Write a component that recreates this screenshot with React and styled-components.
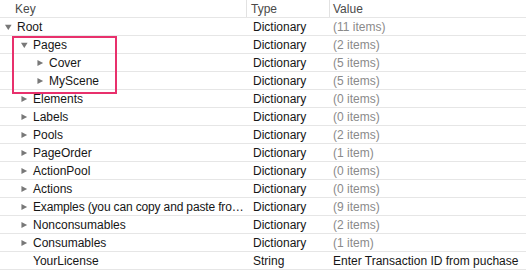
import React from 'react'
import styled, { createGlobalStyle } from 'styled-components'

const GlobalStyle = createGlobalStyle`
  body {
    margin: 0;
    background: #ffffff;
    font-family: "Liberation Sans", Arial, sans-serif;
  }
`

const Table = styled.div`
  position: relative;
  width: 526px;
  height: 270px;
  overflow: hidden;
  background: #fff;
  font-size: 12px;
  color: #161616;
`

const Row = styled.div`
  display: grid;
  grid-template-columns: 246px 83px 1fr;
  height: 18px;
  box-sizing: border-box;
  border-bottom: 1px solid #e6e6e6;
  align-items: center;
  white-space: nowrap;
`

const HeadCell = styled.div`
  height: 100%;
  display: flex;
  align-items: center;
  padding-left: ${p => p.$pad}px;
  color: #4a4a4a;
  border-left: ${p => (p.$sep ? '1px solid #e2e2e2' : 'none')};
  box-sizing: border-box;
`

const KeyCell = styled.div`
  display: flex;
  align-items: center;
  padding-left: ${p => 5 + p.$depth * 16}px;
  min-width: 0;
`

const Label = styled.span`
  letter-spacing: ${p => (p.$tight ? '-0.15px' : 'normal')};
`

const TypeCell = styled.div`
  padding-left: 7px;
`

const ValueCell = styled.div`
  padding-left: 4px;
  color: ${p => (p.$muted ? '#8a8a8a' : '#161616')};
`

const Toggle = styled.span`
  width: 7px;
  height: 8px;
  margin-right: 5px;
  display: inline-flex;
  align-items: center;
  justify-content: center;
  flex: none;
`

const Highlight = styled.div`
  position: absolute;
  left: 12px;
  top: 36px;
  width: 105px;
  height: 58px;
  box-sizing: border-box;
  border: 2px solid #e8306c;
  pointer-events: none;
`

function Arrow({ open }) {
  return (
    <Toggle>
      <svg width="8" height="8" viewBox="0 0 8 8">
        {open ? (
          <path d="M0 1.5 L7.5 1.5 L3.75 7.5 Z" fill="#787878" />
        ) : (
          <path d="M0.5 0.5 L7 4 L0.5 7.5 Z" fill="#787878" />
        )}
      </svg>
    </Toggle>
  )
}

const rows = [
  { key: 'Root', depth: 0, open: true, type: 'Dictionary', value: '(11 items)' },
  { key: 'Pages', depth: 1, open: true, type: 'Dictionary', value: '(2 items)' },
  { key: 'Cover', depth: 2, type: 'Dictionary', value: '(5 items)' },
  { key: 'MyScene', depth: 2, type: 'Dictionary', value: '(5 items)' },
  { key: 'Elements', depth: 1, type: 'Dictionary', value: '(0 items)' },
  { key: 'Labels', depth: 1, type: 'Dictionary', value: '(0 items)' },
  { key: 'Pools', depth: 1, type: 'Dictionary', value: '(2 items)' },
  { key: 'PageOrder', depth: 1, type: 'Dictionary', value: '(1 item)' },
  { key: 'ActionPool', depth: 1, type: 'Dictionary', value: '(0 items)' },
  { key: 'Actions', depth: 1, type: 'Dictionary', value: '(0 items)' },
  { key: 'Examples (you can copy and paste fro…', depth: 1, tight: true, type: 'Dictionary', value: '(9 items)' },
  { key: 'Nonconsumables', depth: 1, type: 'Dictionary', value: '(2 items)' },
  { key: 'Consumables', depth: 1, type: 'Dictionary', value: '(1 item)' },
  { key: 'YourLicense', depth: 1, leaf: true, type: 'String', value: 'Enter Transaction ID from puchase', plain: true },
]

export default function App() {
  return (
    <Table>
      <GlobalStyle />
      <Row>
        <HeadCell $pad={15}>Key</HeadCell>
        <HeadCell $pad={4} $sep>Type</HeadCell>
        <HeadCell $pad={3} $sep>Value</HeadCell>
      </Row>
      {rows.map(r => (
        <Row key={r.key}>
          <KeyCell $depth={r.depth}>
            {r.leaf ? <Toggle /> : <Arrow open={r.open} />}
            <Label $tight={r.tight}>{r.key}</Label>
          </KeyCell>
          <TypeCell>{r.type}</TypeCell>
          <ValueCell $muted={!r.plain}>{r.value}</ValueCell>
        </Row>
      ))}
      <Highlight />
    </Table>
  )
}
